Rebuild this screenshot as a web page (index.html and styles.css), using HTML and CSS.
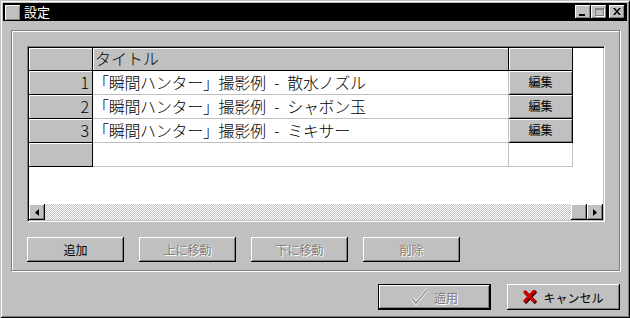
FILE: index.html
```html
<!DOCTYPE html>
<html lang="ja">
<head>
  <meta charset="UTF-8" />
  <title>設定</title>
  <link rel="stylesheet" href="styles.css">
</head>
<body>
  <div class="window">
    <div class="titlebar">
      <span class="sysicon"></span>
      <span class="title">設定</span>
      <span class="caption-btns">
        <span class="cbtn min"><i></i></span>
        <span class="cbtn max"><i></i></span>
        <span class="cbtn close">
          <svg width="8" height="7" viewBox="0 0 8 7"><path d="M0 0h2l2 2.5L6 0h2L5 3.5 8 7H6L4 4.5 2 7H0l3-3.5z" fill="#000"/></svg>
        </span>
      </span>
    </div>

    <div class="group">
      <div class="grid">
        <div class="cells">
          <div class="fixed"></div>
          <div class="fixed head">タイトル</div>
          <div class="fixed"></div>

          <div class="fixed num">1</div>
          <div class="cell">「瞬間ハンター」撮影例 - 散水ノズル</div>
          <div class="cell-btn">編集</div>

          <div class="fixed num">2</div>
          <div class="cell">「瞬間ハンター」撮影例 - シャボン玉</div>
          <div class="cell-btn">編集</div>

          <div class="fixed num">3</div>
          <div class="cell">「瞬間ハンター」撮影例 - ミキサー</div>
          <div class="cell-btn">編集</div>

          <div class="fixed num"></div>
          <div class="cell"></div>
          <div class="cell"></div>
        </div>
        <div class="hscroll">
          <span class="sbtn"><svg width="4" height="7" viewBox="0 0 4 7"><path d="M4 0v7L0 3.5z" fill="#000"/></svg></span>
          <span class="track"></span>
          <span class="sbtn"></span>
          <span class="sbtn"><svg width="4" height="7" viewBox="0 0 4 7"><path d="M0 0v7l4-3.5z" fill="#000"/></svg></span>
        </div>
      </div>

      <div class="actions">
        <button class="btn">追加</button>
        <button class="btn disabled">上に移動</button>
        <button class="btn disabled">下に移動</button>
        <button class="btn disabled">削除</button>
      </div>
    </div>

    <div class="footer">
      <button class="btn big default disabled">
        <svg width="18" height="16" viewBox="0 0 18 16"><path d="M1 9l4 5L16 1" fill="none" stroke="#fff" stroke-width="3"/><path d="M1 9l4 5L16 1" fill="none" stroke="#808080" stroke-width="1.6"/><path d="M1.6 9.2l3.4 4.2L15.6 1.6" fill="none" stroke="#c0c0c0" stroke-width="0.6"/></svg>
        <span>適用</span>
      </button>
      <button class="btn big">
        <svg width="15" height="14" viewBox="0 0 15 14"><path d="M2 2l11 11M13 1L2 13" stroke="#400" stroke-width="3.4"/><path d="M1 1l11 11M12 0L1 12" stroke="#d00000" stroke-width="3"/></svg>
        <span>キャンセル</span>
      </button>
    </div>
  </div>
</body>
</html>
```

FILE: styles.css
```css
* { box-sizing: border-box; }
body { margin: 0; background: #c0c0c0; font-family: "Noto Sans CJK JP", "Liberation Sans", sans-serif; font-size: 12px; color: #000; }

.window { width: 630px; height: 318px; padding: 3px; background: #c0c0c0;
  box-shadow: inset 1px 1px 0 #c0c0c0, inset -1px -1px 0 #000, inset 2px 2px 0 #fff, inset -2px -2px 0 #808080; }

.titlebar { height: 18px; background: #000; color: #fff; display: flex; align-items: center; padding-left: 2px; padding-right: 2px; }
.sysicon { width: 15px; height: 15px; background: #c0c0c0; box-shadow: inset 1px 1px 0 #fff, inset -1px -1px 0 #808080; }
.title { margin-left: 4px; font-size: 13px; line-height: 18px; }
.caption-btns { margin-left: auto; display: flex; }
.cbtn { width: 16px; height: 14px; background: #c0c0c0; position: relative; display: flex; align-items: center; justify-content: center;
  box-shadow: inset -1px -1px 0 #000, inset 1px 1px 0 #fff, inset -2px -2px 0 #808080; }
.cbtn.min i { position: absolute; left: 4px; bottom: 3px; width: 6px; height: 2px; background: #000; }
.cbtn.max i { width: 9px; height: 8px; border: 1px solid #808080; border-top-width: 2px; box-shadow: 1px 1px 0 #fff; }
.cbtn.close { margin-left: 2px; }
.cbtn.close svg { margin-top: -1px; margin-left: -1px; }

.group { margin: 9px 0 0 8px; width: 609px; height: 241px; border: 1px solid #808080; padding: 15px 0 0 15px;
  box-shadow: inset 1px 1px 0 #fff, 1px 1px 0 #fff; }

.grid { width: 578px; height: 176px; padding: 1px; background: #fff; display: flex; flex-direction: column;
  border: 1px solid; border-color: #808080 #fff #fff #808080;
  box-shadow: inset 1px 1px 0 #000, inset -1px -1px 0 #c0c0c0; }
.cells { display: grid; grid-template-columns: 64px 416px 64px; grid-template-rows: 23px repeat(4, 24px); font-size: 16px; font-weight: 300; }
.fixed { background: #c0c0c0; border-right: 1px solid #000; border-bottom: 1px solid #000; box-shadow: inset 1px 1px 0 #fff; line-height: 22px; padding-left: 2px; white-space: nowrap; }
.fixed.head { line-height: 21px; }
.fixed.num { text-align: right; padding-right: 3px; }
.cell { background: #fff; border-right: 1px solid #c0c0c0; border-bottom: 1px solid #c0c0c0; line-height: 22px; white-space: nowrap; word-spacing: 5px; letter-spacing: -0.3px; }
.cell-btn { background: #c0c0c0; border-right: 1px solid #000; border-bottom: 1px solid #000; font-size: 12px; font-weight: 400; text-align: center; line-height: 22px;
  box-shadow: inset 1px 1px 0 #fff, inset -1px -1px 0 #808080; }

.hscroll { margin-top: auto; height: 16px; display: flex; }
.sbtn { width: 16px; height: 16px; background: #c0c0c0; display: flex; align-items: center; justify-content: center;
  box-shadow: inset -1px -1px 0 #000, inset 1px 1px 0 #fff, inset -2px -2px 0 #808080; }
.track { flex: 1; background: repeating-conic-gradient(#fff 0 25%, #c0c0c0 0 50%) 0 0 / 2px 2px; }

.actions { display: flex; gap: 15px; margin-top: 15px; }
.btn { font-family: inherit; font-size: 12px; width: 97px; height: 25px; padding: 0; border: 0; background: #c0c0c0; color: #000;
  display: flex; align-items: center; justify-content: center; gap: 5px;
  box-shadow: inset -1px -1px 0 #000, inset 1px 1px 0 #fff, inset -2px -2px 0 #808080; }
.btn.disabled { color: #808080; text-shadow: 1px 1px 0 #fff; }

.footer { display: flex; justify-content: flex-end; gap: 16px; margin-top: 13px; padding-right: 7px; }
.btn.big { width: 113px; height: 26px; }
.btn.big svg { flex: none; }
.btn.default { box-shadow: inset 0 0 0 1px #000, inset -2px -2px 0 #000, inset 2px 2px 0 #fff, inset -3px -3px 0 #808080; }
```
